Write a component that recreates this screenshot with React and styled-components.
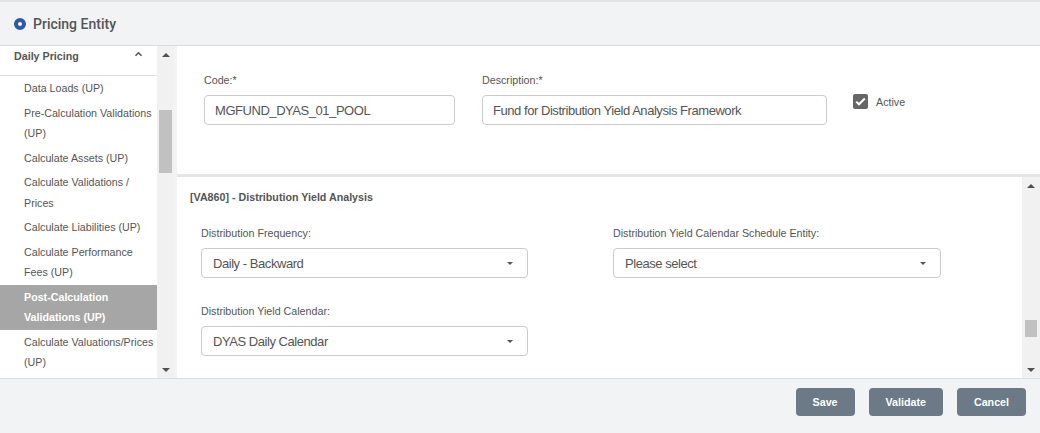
import React from "react";
import styled, { createGlobalStyle } from "styled-components";

const GlobalStyle = createGlobalStyle`
  html, body {
    margin: 0;
    padding: 0;
  }
  body {
    font-family: "Liberation Sans", Arial, sans-serif;
    background: #f2f3f5;
    color: #555;
  }
`;

const menuItems = [
  { label: "Data Loads (UP)" },
  { label: "Pre-Calculation Validations (UP)" },
  { label: "Calculate Assets (UP)" },
  { label: "Calculate Validations / Prices" },
  { label: "Calculate Liabilities (UP)" },
  { label: "Calculate Performance Fees (UP)" },
  { label: "Post-Calculation Validations (UP)", active: true },
  { label: "Calculate Valuations/Prices (UP)" },
];

const App = () => {
  return (
    <>
      <GlobalStyle />
      <Page>
        <Header>
          <RadioMark />
          <Title>Pricing Entity</Title>
        </Header>

        <Body>
          <Sidebar>
            <SideList>
              <GroupHead>
                <span>Daily Pricing</span>
                <svg width="9" height="6" viewBox="0 0 9 6">
                  <polyline
                    points="1.5,4.8 4.5,1.8 7.5,4.8"
                    fill="none"
                    stroke="#555"
                    strokeWidth="1.6"
                  />
                </svg>
              </GroupHead>
              {menuItems.map((item) => (
                <MenuItem key={item.label} $active={item.active}>
                  {item.label}
                </MenuItem>
              ))}
            </SideList>
            <ScrollBar $width={17} $thumbTop={47} $thumbHeight={63} $inset={2} />
          </Sidebar>

          <Main>
            <TopPanel>
              <Field $width={251}>
                <Label>Code:*</Label>
                <TextInput>MGFUND_DYAS_01_POOL</TextInput>
              </Field>
              <Field $width={345}>
                <Label>Description:*</Label>
                <TextInput>Fund for Distribution Yield Analysis Framework</TextInput>
              </Field>
              <CheckWrap>
                <CheckBox>
                  <svg width="11" height="9" viewBox="0 0 11 9">
                    <polyline
                      points="1.2,4.6 4,7.3 9.8,1.5"
                      fill="none"
                      stroke="#fff"
                      strokeWidth="2"
                    />
                  </svg>
                </CheckBox>
                <CheckLabel>Active</CheckLabel>
              </CheckWrap>
            </TopPanel>

            <BottomPanel>
              <Section>
                <SectionTitle>[VA860] - Distribution Yield Analysis</SectionTitle>
                <FormGrid>
                  <Field>
                    <Label>Distribution Frequency:</Label>
                    <Select>Daily - Backward</Select>
                  </Field>
                  <Field>
                    <Label>Distribution Yield Calendar Schedule Entity:</Label>
                    <Select>Please select</Select>
                  </Field>
                  <Field>
                    <Label>Distribution Yield Calendar:</Label>
                    <Select>DYAS Daily Calendar</Select>
                  </Field>
                </FormGrid>
              </Section>
              <ScrollBar $width={18} $thumbTop={126} $thumbHeight={17} $inset={3} />
            </BottomPanel>
          </Main>
        </Body>

        <Footer>
          <Button>Save</Button>
          <Button>Validate</Button>
          <Button>Cancel</Button>
        </Footer>
      </Page>
    </>
  );
};

const ScrollBar = ({ $width, $thumbTop, $thumbHeight, $inset }) => (
  <Track $width={$width}>
    <Arrow $dir="up" />
    <Rail>
      <Thumb $top={$thumbTop} $height={$thumbHeight} $inset={$inset} />
    </Rail>
    <Arrow $dir="down" />
  </Track>
);

const Page = styled.div`
  width: 1040px;
  height: 433px;
  display: flex;
  flex-direction: column;
  overflow: hidden;
  background: #f2f3f5;
`;

const Header = styled.header`
  height: 46px;
  box-sizing: border-box;
  border-top: 2px solid #e2e3e5;
  border-bottom: 1px solid #dcdcdc;
  display: flex;
  align-items: center;
  gap: 7px;
  padding-left: 14px;
`;

const RadioMark = styled.span`
  width: 12px;
  height: 12px;
  box-sizing: border-box;
  border-radius: 50%;
  border: 4px solid #2b58a8;
  background: #fff;
  margin-top: 1px;
`;

const Title = styled.h1`
  margin: 0;
  font-family: Roboto, "Liberation Sans", sans-serif;
  font-size: 14px;
  font-weight: 500;
  color: #555;
`;

const Body = styled.div`
  height: 332px;
  display: flex;
`;

const Sidebar = styled.aside`
  width: 174px;
  display: flex;
  background: #fff;
`;

const SideList = styled.nav`
  width: 157px;
  overflow: hidden;
  background: #fff;
`;

const GroupHead = styled.div`
  height: 29px;
  border-bottom: 1px solid #dedede;
  display: flex;
  justify-content: space-between;
  padding: 0 14px 0 14px;
  font-size: 10.7px;
  font-weight: bold;
  line-height: 20px;
  color: #555;

  svg {
    margin-top: 5px;
  }
`;

const MenuItem = styled.div`
  padding: 2px 1px 2px 24px;
  font-size: 10.7px;
  line-height: 20.5px;
  color: ${(p) => (p.$active ? "#fff" : "#555")};
  background: ${(p) => (p.$active ? "#a6a6a6" : "transparent")};
  font-weight: ${(p) => (p.$active ? "bold" : "normal")};
`;

const Track = styled.div`
  width: ${(p) => p.$width}px;
  flex-shrink: 0;
  display: flex;
  flex-direction: column;
  background: #f1f1f1;
`;

const Arrow = styled.div`
  height: 17px;
  display: flex;
  align-items: center;
  justify-content: center;

  &::before {
    content: "";
    border-left: 4px solid transparent;
    border-right: 4px solid transparent;
    ${(p) =>
      p.$dir === "up"
        ? "border-bottom: 4px solid #505050;"
        : "border-top: 4px solid #505050;"}
  }
`;

const Rail = styled.div`
  flex: 1;
`;

const Thumb = styled.div`
  margin: ${(p) => p.$top}px ${(p) => p.$inset}px 0;
  height: ${(p) => p.$height}px;
  background: #c1c1c1;
`;

const Main = styled.main`
  flex: 1;
  margin-left: 3px;
  display: flex;
  flex-direction: column;
  background: #f1f1f1;
`;

const TopPanel = styled.section`
  height: 131px;
  box-sizing: border-box;
  background: #fff;
  border-bottom: 3px solid #e6e6e6;
  display: flex;
  align-items: flex-start;
  gap: 27px;
  padding: 27px 0 0 27px;
`;

const Field = styled.div`
  display: flex;
  flex-direction: column;
  gap: 8px;
  ${(p) => (p.$width ? `width: ${p.$width}px;` : "")}
`;

const Label = styled.label`
  font-size: 10.7px;
  line-height: 14px;
  color: #555;
`;

const TextInput = styled.div`
  height: 30px;
  box-sizing: border-box;
  border: 1px solid #ccc;
  border-radius: 4px;
  padding: 0 10px;
  display: flex;
  align-items: center;
  font-size: 13px;
  letter-spacing: -0.45px;
  color: #555;
  white-space: nowrap;
  overflow: hidden;
`;

const CheckWrap = styled.div`
  margin-top: 21px;
  margin-left: -1px;
  display: flex;
  align-items: center;
  gap: 8px;
`;

const CheckBox = styled.span`
  width: 15px;
  height: 15px;
  border-radius: 2px;
  background: #666;
  display: flex;
  align-items: center;
  justify-content: center;
`;

const CheckLabel = styled.span`
  font-size: 10.7px;
  color: #555;
`;

const BottomPanel = styled.section`
  flex: 1;
  display: flex;
  background: #fff;
  overflow: hidden;
`;

const Section = styled.div`
  flex: 1;
  padding: 14px 0 0 13px;
`;

const SectionTitle = styled.h2`
  margin: 0;
  font-size: 10.7px;
  line-height: 13px;
  font-weight: bold;
  color: #555;
`;

const FormGrid = styled.div`
  margin: 22px 0 0 11px;
  display: grid;
  grid-template-columns: 327px 328px;
  column-gap: 85px;
  row-gap: 26px;
`;

const Select = styled.div`
  height: 30px;
  box-sizing: border-box;
  border: 1px solid #ccc;
  border-radius: 4px;
  padding: 0 11px;
  display: flex;
  align-items: center;
  justify-content: space-between;
  font-size: 13px;
  letter-spacing: -0.45px;
  color: #555;

  &::after {
    content: "";
    margin-right: 3px;
    border-left: 3.5px solid transparent;
    border-right: 3.5px solid transparent;
    border-top: 3.5px solid #555;
  }
`;

const Footer = styled.footer`
  flex: 1;
  border-top: 1px solid #dedede;
  display: flex;
  justify-content: flex-end;
  align-items: flex-start;
  gap: 14px;
  padding: 9px 14px 0 0;
`;

const Button = styled.button`
  height: 28px;
  padding: 0 17px;
  border: none;
  border-radius: 4px;
  background: #6b7a86;
  color: #fff;
  font-family: "Liberation Sans", Arial, sans-serif;
  font-size: 10.7px;
  font-weight: bold;
`;

export default App;
